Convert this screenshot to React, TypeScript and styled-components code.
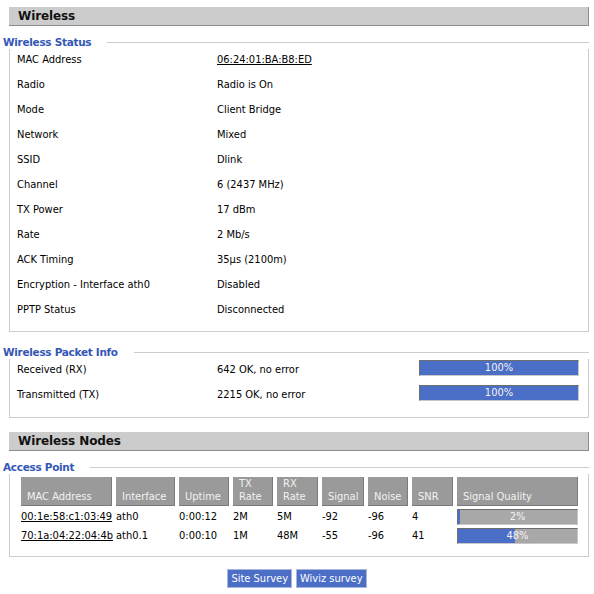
import React from 'react';
import styled, { createGlobalStyle } from 'styled-components';

const BODY_FONT = `"DejaVu Sans Condensed", "Liberation Sans", sans-serif`;
const HEAD_FONT = `"DejaVu Sans", "Liberation Sans", sans-serif`;

const colors = {
  legend: '#3457b5',
  bar: '#4b6ec6',
  barEmpty: '#a8a8a8',
  line: '#cccccc',
  heading: '#cccccc',
  th: '#9a9a9a',
};

const GlobalStyle = createGlobalStyle`
  body {
    margin: 0;
    background: #fff;
    color: #000;
    font-family: ${BODY_FONT};
    font-size: 11px;
  }
`;

const Page = styled.div`
  width: 580px;
  padding: 7px 5px 0 9px;
`;

const SectionBar = styled.div<{ $top?: number }>`
  margin-top: ${({ $top }) => $top ?? 0}px;
  height: 18px;
  line-height: 19px;
  padding-left: 9px;
  background: ${colors.heading};
  border-bottom: 1px solid #8c8c8c;
  border-right: 1px solid #8c8c8c;
  font-family: ${HEAD_FONT};
  font-weight: bold;
  font-size: 12px;
  letter-spacing: -0.1px;
  color: #111;
`;

const Group = styled.div<{ $top: number }>`
  margin-top: ${({ $top }) => $top}px;
`;

const LegendRow = styled.div`
  display: flex;
  align-items: center;
  height: 13px;
  margin-left: -6px;
`;

const LegendText = styled.span`
  font-family: ${HEAD_FONT};
  font-weight: bold;
  font-size: 10.5px;
  letter-spacing: -0.3px;
  color: ${colors.legend};
  padding-right: 16px;
  line-height: 13px;
`;

const LegendLine = styled.div`
  flex: 1;
  height: 1px;
  background: ${colors.line};
`;

const GroupBody = styled.div<{ $pad: string }>`
  border: 1px solid ${colors.line};
  border-top: none;
  padding: ${({ $pad }) => $pad};
`;

const InfoRow = styled.div`
  display: grid;
  grid-template-columns: 200px 202px 160px;
  height: 25px;
  align-items: start;
`;

const InfoCell = styled.div`
  padding-top: 4px;
  line-height: 14px;
  white-space: nowrap;
`;

const Link = styled.a`
  color: #000;
  text-decoration: underline;
`;

const Meter = styled.div<{ $pct: number; $h: number; $top?: number }>`
  box-sizing: border-box;
  height: ${({ $h }) => $h}px;
  margin-top: ${({ $top }) => $top ?? 0}px;
  border-top: 1px solid #6e6e6e;
  border-left: 1px solid #6e6e6e;
  border-bottom: 1px solid #c8c8c8;
  border-right: 1px solid #c8c8c8;
  background: linear-gradient(
    to right,
    ${colors.bar} ${({ $pct }) => $pct}%,
    ${colors.barEmpty} ${({ $pct }) => $pct}%
  );
  color: #f4f4f4;
  text-align: center;
  font-size: 11px;
  line-height: ${({ $h }) => $h - 2}px;
`;

const NodesTable = styled.table`
  table-layout: fixed;
  width: 561px;
  border-spacing: 4px 3px;
  margin-left: 7px;
  font-size: 11px;
`;

const Th = styled.th<{ $w: number }>`
  width: ${({ $w }) => $w}px;
  box-sizing: border-box;
  height: 29px;
  padding: 0 0 2px 6px;
  background: ${colors.th};
  border-right: 1px solid #7a7a7a;
  border-bottom: 1px solid #7a7a7a;
  color: #f2f2f2;
  font-weight: normal;
  text-align: left;
  vertical-align: bottom;
  line-height: 13px;
`;

const Td = styled.td`
  padding: 0;
  height: 16px;
  line-height: 16px;
  white-space: nowrap;
  vertical-align: middle;
  overflow: visible;
`;

const ButtonRow = styled.div`
  display: flex;
  justify-content: center;
  gap: 4px;
  margin: 12px 0 0 -9px;
  width: 594px;
`;

const Button = styled.button`
  height: 19px;
  padding: 0 3px;
  background: ${colors.bar};
  border: 1px solid #aab6de;
  color: #fff;
  font-family: ${BODY_FONT};
  font-size: 11px;
  line-height: 17px;
  cursor: pointer;
`;

const status: [string, React.ReactNode][] = [
  ['MAC Address', <Link href="#">06:24:01:BA:B8:ED</Link>],
  ['Radio', 'Radio is On'],
  ['Mode', 'Client Bridge'],
  ['Network', 'Mixed'],
  ['SSID', 'Dlink'],
  ['Channel', '6 (2437 MHz)'],
  ['TX Power', '17 dBm'],
  ['Rate', '2 Mb/s'],
  ['ACK Timing', '35µs (2100m)'],
  ['Encryption - Interface ath0', 'Disabled'],
  ['PPTP Status', 'Disconnected'],
];

const packets = [
  { label: 'Received (RX)', value: '642 OK, no error', pct: 100 },
  { label: 'Transmitted (TX)', value: '2215 OK, no error', pct: 100 },
];

const columns: [React.ReactNode, number][] = [
  ['MAC Address', 91],
  ['Interface', 59],
  ['Uptime', 50],
  [<>TX<br />Rate</>, 40],
  [<>RX<br />Rate</>, 41],
  ['Signal', 42],
  ['Noise', 40],
  ['SNR', 41],
  ['Signal Quality', 121],
];

const nodes = [
  { mac: '00:1e:58:c1:03:49', iface: 'ath0', uptime: '0:00:12', tx: '2M', rx: '5M', signal: '-92', noise: '-96', snr: '4', q: 2 },
  { mac: '70:1a:04:22:04:4b', iface: 'ath0.1', uptime: '0:00:10', tx: '1M', rx: '48M', signal: '-55', noise: '-96', snr: '41', q: 48 },
];

export default function App() {
  return (
    <>
      <GlobalStyle />
      <Page>
        <SectionBar>Wireless</SectionBar>

        <Group $top={10}>
          <LegendRow>
            <LegendText>Wireless Status</LegendText>
            <LegendLine />
          </LegendRow>
          <GroupBody $pad="0 0 7px 7px">
            {status.map(([label, value]) => (
              <InfoRow key={label}>
                <InfoCell>{label}</InfoCell>
                <InfoCell>{value}</InfoCell>
              </InfoRow>
            ))}
          </GroupBody>
        </Group>

        <Group $top={14}>
          <LegendRow>
            <LegendText>Wireless Packet Info</LegendText>
            <LegendLine />
          </LegendRow>
          <GroupBody $pad="0 0 8px 7px">
            {packets.map((p) => (
              <InfoRow key={p.label}>
                <InfoCell>{p.label}</InfoCell>
                <InfoCell>{p.value}</InfoCell>
                <Meter $pct={p.pct} $h={16} $top={1}>
                  {p.pct}%
                </Meter>
              </InfoRow>
            ))}
          </GroupBody>
        </Group>

        <SectionBar $top={14}>Wireless Nodes</SectionBar>

        <Group $top={10}>
          <LegendRow>
            <LegendText>Access Point</LegendText>
            <LegendLine />
          </LegendRow>
          <GroupBody $pad="0 0 9px 0">
            <NodesTable>
              <thead>
                <tr>
                  {columns.map(([title, w], i) => (
                    <Th key={i} $w={w}>
                      {title}
                    </Th>
                  ))}
                </tr>
              </thead>
              <tbody>
                {nodes.map((n) => (
                  <tr key={n.mac}>
                    <Td>
                      <Link href="#">{n.mac}</Link>
                    </Td>
                    <Td>{n.iface}</Td>
                    <Td>{n.uptime}</Td>
                    <Td>{n.tx}</Td>
                    <Td>{n.rx}</Td>
                    <Td>{n.signal}</Td>
                    <Td>{n.noise}</Td>
                    <Td>{n.snr}</Td>
                    <Td>
                      <Meter $pct={n.q} $h={16}>
                        {n.q}%
                      </Meter>
                    </Td>
                  </tr>
                ))}
              </tbody>
            </NodesTable>
          </GroupBody>
        </Group>

        <ButtonRow>
          <Button type="button">Site Survey</Button>
          <Button type="button">Wiviz survey</Button>
        </ButtonRow>
      </Page>
    </>
  );
}
